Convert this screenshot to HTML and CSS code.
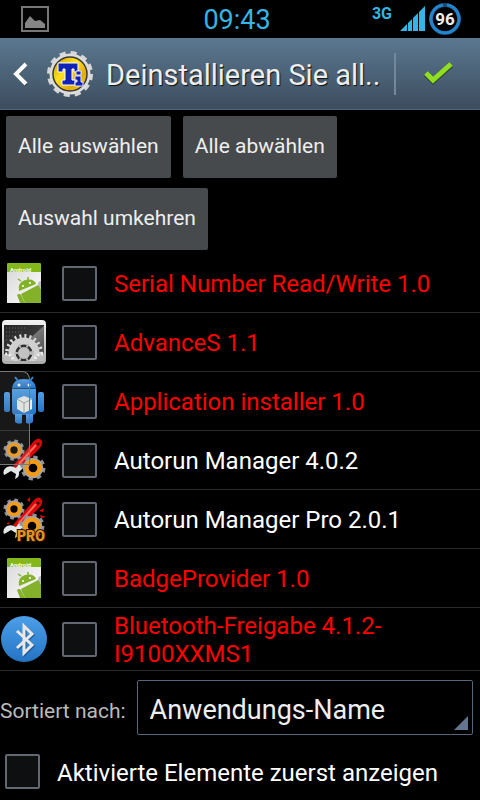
FILE: index.html
```html
<!DOCTYPE html>
<html lang="de">
<head>
    <meta charset="UTF-8">
    <meta name="viewport" content="width=device-width, initial-scale=1.0">
    <title>Deinstallieren</title>
    <link rel="stylesheet" href="styles.css">
</head>
<body>
    <svg class="defs" width="0" height="0" aria-hidden="true">
        <defs>
            <linearGradient id="paper" x1="0" y1="0" x2="1" y2="1">
                <stop offset="0" stop-color="#d6d6d6"/>
                <stop offset="1" stop-color="#ffffff"/>
            </linearGradient>
            <linearGradient id="silver" x1="0" y1="0" x2="0" y2="1">
                <stop offset="0" stop-color="#f4f4f4"/>
                <stop offset="1" stop-color="#a9a9a9"/>
            </linearGradient>
            <linearGradient id="blue" x1="0" y1="0" x2="0" y2="1">
                <stop offset="0" stop-color="#4d9fe8"/>
                <stop offset="1" stop-color="#2474c4"/>
            </linearGradient>
            <linearGradient id="gold" x1="0" y1="0" x2="1" y2="1">
                <stop offset="0" stop-color="#c39b10"/>
                <stop offset="0.4" stop-color="#ffe21c"/>
                <stop offset="0.7" stop-color="#e0aa12"/>
                <stop offset="1" stop-color="#ffd91a"/>
            </linearGradient>
            <linearGradient id="dark" x1="0" y1="0" x2="1" y2="1">
                <stop offset="0" stop-color="#242424"/>
                <stop offset="0.5" stop-color="#383838"/>
                <stop offset="0.52" stop-color="#777"/>
                <stop offset="1" stop-color="#444"/>
            </linearGradient>
            <clipPath id="panel">
                <rect x="3" y="6" width="40" height="36"/>
            </clipPath>
            <symbol id="androidDoc" viewBox="0 0 46 46">
                <path d="M6 5q0-2 2-2h30q2 0 2 2v38H6z" fill="url(#paper)"/>
                <path d="M6 5q0-2 2-2h30q2 0 2 2v7H6z" fill="#83b81a"/>
                <text x="9" y="12" font-size="6" font-weight="700" fill="#f4ffe0">Android</text>
                <path d="M40 21v7a3 3.500 0 0 1 0-7z" fill="#b9bfc0"/>
                <g fill="#83b12a">
                    <path d="M18 31q-2-8 6-11 9-2 11 4z"/>
                    <path d="M20 34l17-9 3 4v14H24z"/>
                    <path d="M16 35q2-2 4 0l4 8h-5z"/>
                </g>
                <path d="M20 21l-3-2M27 20v-3" stroke="#83b12a" stroke-width="1.500"/>
                <circle cx="22" cy="26" r="1" fill="#fff"/>
                <circle cx="29" cy="23" r="1" fill="#fff"/>
            </symbol>
            <symbol id="gear" viewBox="0 0 24 24">
                <circle cx="12" cy="12" r="10" fill="none" stroke="#8e9196" stroke-width="3" stroke-dasharray="3.930"/>
                <circle cx="12" cy="12" r="7" fill="none" stroke="#a3a3a8" stroke-width="5"/>
                <circle cx="12" cy="12" r="6" fill="none" stroke="#f39a16" stroke-width="4"/>
            </symbol>
            <symbol id="tools" viewBox="0 0 46 46">
                <path d="M12 29L33 4q5-5 8 0 1 4-3 8L17 33z" fill="#d90808"/>
                <path d="M18 27L35 8" stroke="#ff6a58" stroke-width="2"/>
                <circle cx="37" cy="7" r="1.500" fill="#200"/>
                <path d="M14 42l1-5-5-3-5 3-2 1q-2-5 3-8 5-2 9 1l3-4 4 4-4 4q1 5-4 7z" fill="#e4e7e7"/>
                <use href="#gear" x="2" y="2" width="22" height="22"/>
            </symbol>
        </defs>
    </svg>

    <div class="status-bar">
        <svg class="picture-icon" width="30" height="28" viewBox="0 0 30 28" aria-hidden="true">
            <rect x="2" y="2" width="26" height="24" fill="#050505" stroke="#777" stroke-width="2"/>
            <path d="M5 23v-5l5-7 5 5 5-1 5 4v4z" fill="#858585"/>
        </svg>
        <span class="clock">09:43</span>
        <div class="status-right">
            <span class="network">3G</span>
            <svg width="26" height="26" viewBox="0 0 26 26" aria-hidden="true">
                <path d="M0 25L25 0v25z" fill="#33b5e5"/>
                <path d="M7.500 0v26M12.500 0v26M18.500 0v26" stroke="#000"/>
            </svg>
            <svg width="34" height="34" viewBox="0 0 34 34" role="img" aria-label="96">
                <circle cx="17" cy="17" r="14" fill="#000" stroke="#174d78" stroke-width="4"/>
                <path d="M19 3a14 14 0 1 1-4 0" fill="none" stroke="#2284cc" stroke-width="3"/>
                <text x="17" y="23" text-anchor="middle" font-size="17" font-weight="700" fill="#eee">96</text>
            </svg>
        </div>
    </div>

    <header class="action-bar">
        <button class="back-btn" aria-label="Zurück">
            <svg width="16" height="24" viewBox="0 0 16 24"><path d="M14 3L4 13l10 10" stroke="#222c36" stroke-width="3" fill="none"/><path d="M14 2L4 12l10 10" stroke="#fff" stroke-width="4" fill="none"/></svg>
        </button>
        <svg class="logo" width="48" height="48" viewBox="0 0 48 48" aria-hidden="true">
            <circle cx="24" cy="24" r="21" fill="none" stroke="#d6d6d6" stroke-width="4" stroke-dasharray="6 4.995"/>
            <circle cx="24" cy="24" r="20.500" fill="#dcdcdc"/>
            <circle cx="24" cy="24" r="17" fill="url(#gold)" stroke="#393939" stroke-width="1.500"/>
            <path d="M12 13h20v9h-4v-3h-2v11h3v5H16v-5h3V19h-2v3h-5z" fill="#1023b8" stroke="#fff" stroke-width="1"/>
            <path d="M30 21h5v4h-5zM29 26h6v6h2v4h-8v-4h2v-2h-2z" fill="#1023b8" stroke="#e5e5ff" stroke-width="1"/>
        </svg>
        <h1>Deinstallieren Sie all..</h1>
        <button class="done-btn" aria-label="Fertig">
            <svg width="30" height="26" viewBox="0 0 30 26"><path d="M3 13l7 7L28 4" stroke="#34463a" stroke-width="6" fill="none"/><path d="M3 12l7 7L28 3" stroke="#8fdf20" stroke-width="5" fill="none"/></svg>
        </button>
    </header>

    <div class="select-buttons">
        <button class="btn">Alle auswählen</button>
        <button class="btn">Alle abwählen</button>
        <button class="btn">Auswahl umkehren</button>
    </div>

    <div class="app-area">
        <ul class="app-list">
            <li>
                <svg class="app-icon" viewBox="0 0 46 46"><use href="#androidDoc"/></svg>
                <input type="checkbox" id="app1">
                <label class="system" for="app1">Serial Number Read/Write 1.0</label>
            </li>
            <li>
                <svg class="app-icon" viewBox="0 0 46 46">
                    <rect x="1" y="1" width="44" height="44" rx="4" fill="url(#silver)"/>
                    <rect x="3" y="6" width="40" height="36" fill="url(#dark)"/>
                    <path d="M5 9h20M5 13h16M5 17h12M5 21h8" stroke="#666" stroke-dasharray="1 2"/>
                    <g clip-path="url(#panel)">
                        <circle cx="23" cy="34" r="17" fill="none" stroke="#ddd" stroke-width="4" stroke-dasharray="2 3"/>
                        <circle cx="23" cy="34" r="12" fill="#303030" stroke="#d0d0d0" stroke-width="7"/>
                        <circle cx="23" cy="34" r="8" fill="none" stroke="#bbb" stroke-width="4" stroke-dasharray="2 6"/>
                        <circle cx="23" cy="34" r="6" fill="#c2c2c2"/>
                        <circle cx="5" cy="42" r="7" fill="#bbb" stroke="#eee" stroke-width="3" stroke-dasharray="2 2"/>
                        <circle cx="41" cy="42" r="7" fill="#bbb" stroke="#eee" stroke-width="3" stroke-dasharray="2 2"/>
                    </g>
                </svg>
                <input type="checkbox" id="app2">
                <label class="system" for="app2">AdvanceS 1.1</label>
            </li>
            <li>
                <svg class="app-icon" viewBox="0 0 46 46">
                    <g fill="url(#blue)">
                        <path d="M11 10q1-9 12-9t12 9z"/>
                        <path d="M11 11h24v22q0 4-4 4H15q-4 0-4-4z"/>
                        <rect x="3" y="14" width="6" height="20" rx="2"/>
                        <rect x="37" y="14" width="6" height="20" rx="2"/>
                        <path d="M14 36h7v9q-4 2-7-1zM25 36h7v8q-3 3-7 1z"/>
                    </g>
                    <path d="M17 3l-3-4M29 3l3-4" stroke="#3184d0" stroke-width="2"/>
                    <path d="M11 10.500h24" stroke="#17466e"/>
                    <circle cx="18" cy="7" r="1.500" fill="#fff"/>
                    <circle cx="28" cy="7" r="1.500" fill="#fff"/>
                    <path d="M16 21l7-3 8 3v10l-8 4-7-4z" fill="#eee"/>
                    <path d="M16 21l7 4 8-4M23 25v10" fill="none" stroke="#8aa" stroke-width="1"/>
                </svg>
                <input type="checkbox" id="app3">
                <label class="system" for="app3">Application installer 1.0</label>
            </li>
            <li>
                <svg class="app-icon" viewBox="0 0 46 46">
                    <use href="#tools"/>
                    <use href="#gear" x="19" y="18" width="26" height="26"/>
                </svg>
                <input type="checkbox" id="app4">
                <label for="app4">Autorun Manager 4.0.2</label>
            </li>
            <li>
                <svg class="app-icon" viewBox="0 0 46 46">
                    <use href="#tools"/>
                    <path d="M38 15l5-3-1 4zM39 19l6 2-5 1zM26 4l3-3v5zM6 27l3-1-2 3z" fill="#e00"/>
                    <use href="#gear" x="18" y="17" width="26" height="26"/>
                    <text x="16" y="45" font-size="14" font-weight="900" fill="#e8921c" stroke="#2b1600" stroke-width="2" paint-order="stroke">PRO</text>
                </svg>
                <input type="checkbox" id="app5">
                <label for="app5">Autorun Manager Pro 2.0.1</label>
            </li>
            <li>
                <svg class="app-icon" viewBox="0 0 46 46"><use href="#androidDoc"/></svg>
                <input type="checkbox" id="app6">
                <label class="system" for="app6">BadgeProvider 1.0</label>
            </li>
            <li>
                <svg class="app-icon" viewBox="0 0 46 46">
                    <circle cx="23" cy="23" r="23" fill="url(#blue)"/>
                    <path d="M16 15l15 14-8 8V10l8 8-15 14" fill="none" stroke="#205a92" stroke-width="3" transform="translate(1 1)"/>
                    <path d="M16 15l15 14-8 8V10l8 8-15 14" fill="none" stroke="#e8e8e8" stroke-width="3"/>
                </svg>
                <input type="checkbox" id="app7">
                <label class="system" for="app7">Bluetooth-Freigabe 4.1.2-I9100XXMS1</label>
            </li>
        </ul>
        <div class="edge-handle"></div>
    </div>

    <div class="sort-row">
        <label for="sort">Sortiert nach:</label>
        <div class="spinner">
            <select id="sort">
                <option>Anwendungs-Name</option>
            </select>
        </div>
    </div>

    <div class="enabled-row">
        <input type="checkbox" id="enabledFirst">
        <label for="enabledFirst">Aktivierte Elemente zuerst anzeigen</label>
    </div>
</body>
</html>
```
FILE: styles.css
```css
* {
    box-sizing: border-box;
}

body {
    margin: 0;
    background-color: #000;
    color: #fff;
    font-family: Roboto, sans-serif;
    font-size: 24px;
    line-height: 28px;
}

svg {
    display: block;
    flex-shrink: 0;
}

button {
    font-family: inherit;
    border: none;
    cursor: pointer;
}

.defs {
    position: absolute;
}

.status-bar {
    display: grid;
    grid-template-columns: 1fr auto 1fr;
    align-items: center;
    height: 38px;
    padding: 0 18px 0 12px;
    color: #33b5e5;
}

.picture-icon {
    margin-left: 8px;
}

.clock {
    font-size: 27px;
    padding-top: 2px;
}

.status-right {
    display: flex;
    justify-content: flex-end;
    align-items: center;
    gap: 2px;
}

.network {
    align-self: flex-start;
    margin-right: 6px;
    font-size: 16px;
    font-weight: 700;
    line-height: 24px;
}

.action-bar {
    display: flex;
    align-items: center;
    height: 72px;
    padding-left: 12px;
    background: linear-gradient(#5b7890, #3c4d5e);
    border-bottom: 1px solid #4d657a;
}

.back-btn {
    padding: 0;
    margin-right: 18px;
    background: none;
}

.action-bar h1 {
    flex: 1;
    margin: 0 0 0 12px;
    padding-top: 2px;
    font-size: 29px;
    font-weight: 400;
    line-height: 36px;
    color: #eee;
    white-space: nowrap;
    text-shadow: 1px 1px 1px #111;
}

.done-btn {
    display: flex;
    justify-content: center;
    align-items: center;
    width: 86px;
    height: 42px;
    padding: 0;
    background: none;
    border-left: 2px solid #73889a;
}

.select-buttons {
    display: flex;
    flex-wrap: wrap;
    gap: 10px 12px;
    padding: 6px 6px 3px;
}

.btn {
    height: 62px;
    padding: 0 12px 3px;
    background-color: #464a4d;
    border-radius: 2px;
    color: #eee;
    font-size: 21px;
}

.app-area {
    position: relative;
}

.app-list {
    margin: 0;
    padding: 0;
    border-top: 1px solid #000;
    list-style: none;
}

.app-list li {
    display: flex;
    align-items: center;
    min-height: 59px;
    padding: 2px 1px;
    border-bottom: 1px solid #2a2a2a;
}

.app-icon {
    width: 46px;
    height: 46px;
    margin-right: 15px;
    overflow: visible;
}

.app-list label {
    flex: 1;
    margin-left: 17px;
    padding-top: 2px;
}

.system {
    color: #f00;
}

input[type="checkbox"] {
    appearance: none;
    flex-shrink: 0;
    width: 35px;
    height: 35px;
    margin: 0;
    background-color: #0e0f11;
    border: 2px solid #626872;
    border-radius: 2px;
}

input[type="checkbox"]:checked {
    background-color: #8fdf20;
}

/* pull-out tab on the left edge of the screen */
.edge-handle {
    position: absolute;
    left: 0;
    top: 118px;
    width: 30px;
    height: 94px;
    background-color: rgba(160, 160, 160, 0.15);
    border: 1px solid #777;
    border-left: none;
    border-radius: 0 8px 0 0;
    pointer-events: none;
}

.sort-row {
    display: flex;
    align-items: center;
    gap: 11px;
    padding: 9px 7px 9px 0;
}

.sort-row label {
    padding-top: 6px;
    color: #bbb;
    font-size: 21px;
}

.spinner {
    position: relative;
    flex: 1;
}

.spinner::after {
    content: "";
    position: absolute;
    right: 5px;
    bottom: 5px;
    border-left: 14px solid transparent;
    border-bottom: 14px solid #63758f;
    pointer-events: none;
}

.spinner select {
    appearance: none;
    display: block;
    width: 100%;
    height: 55px;
    padding: 4px 12px 0;
    background-color: #000;
    border: 1px solid #53687a;
    border-radius: 2px;
    color: #eee;
    font-family: inherit;
    font-size: 27px;
}

.enabled-row {
    display: flex;
    align-items: center;
    gap: 17px;
    padding: 10px 5px;
}

.enabled-row label {
    padding-top: 2px;
}
```
